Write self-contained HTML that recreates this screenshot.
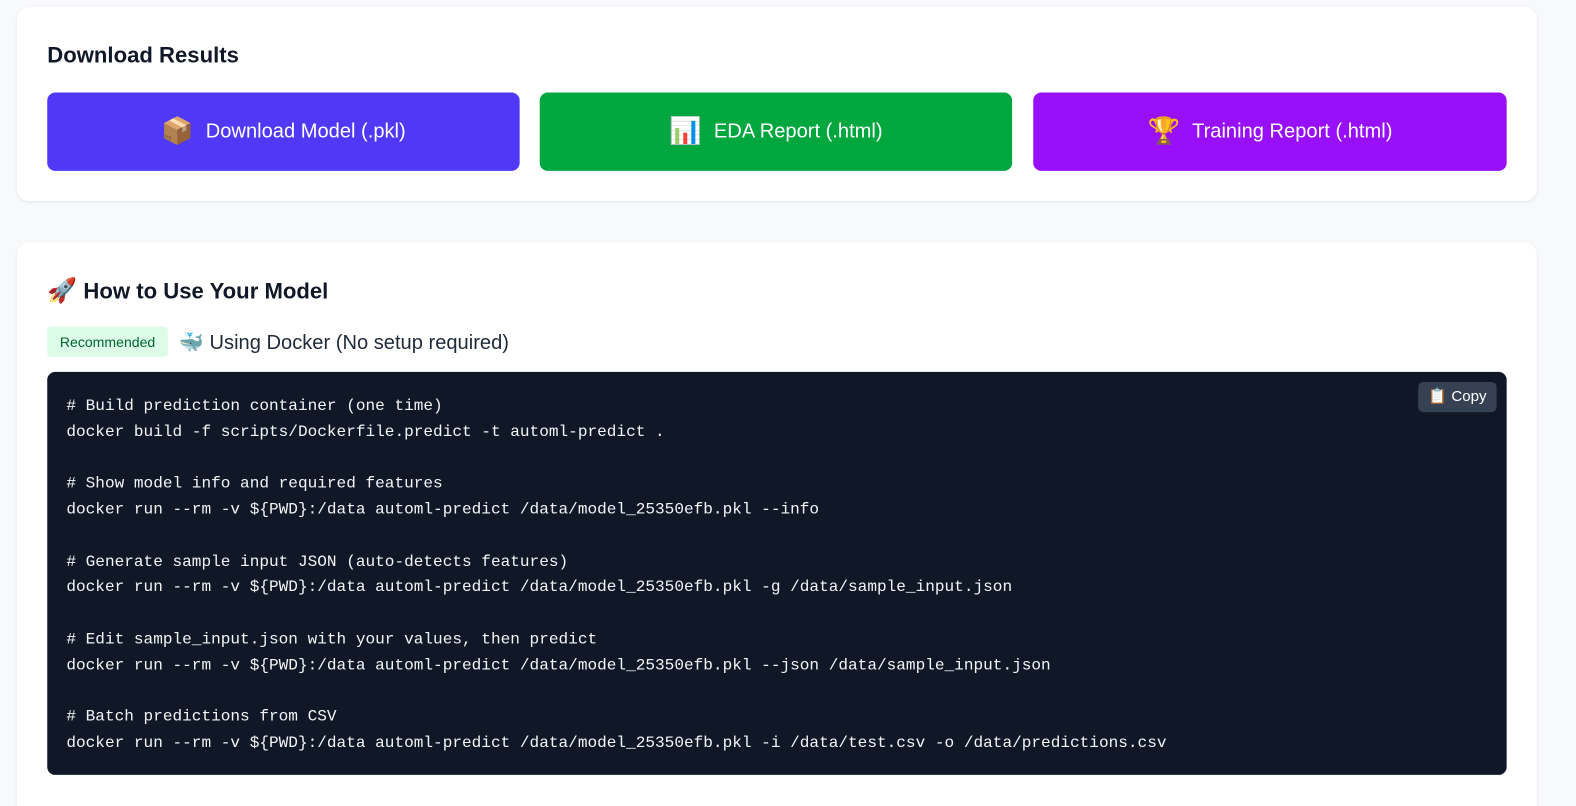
<!DOCTYPE html>
<html style="overflow:hidden;width:1576px"><head><meta charset="utf-8"><style>
html,body{overflow:hidden;margin:0;padding:0}
body{background:#f8f9fb;font-family:"Liberation Sans",sans-serif;width:100%;height:806px;position:relative}
#w{position:absolute;left:0;top:0;width:1568px;height:802px;transform:scale(1.0051);transform-origin:0 0}
.card{position:absolute;left:17px;width:1512px;background:#fff;border-radius:12px;box-shadow:0 1px 3px rgba(0,0,0,.08)}
h2{position:absolute;margin:0;font-size:22px;font-weight:bold;color:#101828}
.btn{position:absolute;top:85px;height:78px;width:470px;border-radius:8px;color:#fff;font-size:20px;display:flex;align-items:center;justify-content:center;gap:12px}
.ico{font-size:26px;font-family:"Noto Color Emoji","DejaVu Sans",sans-serif}
pre{position:absolute;left:30px;top:129px;width:1452px;height:401px;margin:0;background:#101828;border-radius:8px;color:#f3f4f6;font-family:"Liberation Mono",monospace;font-size:16px;line-height:25.75px;padding:22px 0 0 19px;box-sizing:border-box;overflow:hidden}
.copy{position:absolute;right:10px;top:10px;background:#364153;color:#fff;font-family:"Liberation Sans",sans-serif;font-size:15px;padding:0 10px;height:30px;line-height:30px;border-radius:5px}
</style></head><body><div id="w">
<div class="card" style="top:7px;height:193px">
<h2 style="left:30px;top:35px">Download Results</h2>
<div class="btn" style="left:30px;background:#4f39f6"><span class="ico">📦</span>Download Model (.pkl)</div>
<div class="btn" style="left:520px;background:#00a63e"><span class="ico">📊</span>EDA Report (.html)</div>
<div class="btn" style="left:1011px;background:#9810fa;width:471px"><span class="ico">🏆</span>Training Report (.html)</div>
</div>
<div class="card" style="top:241px;height:580px">
<h2 style="left:30px;top:34px"><span class="ico" style="font-size:24px">🚀</span> How to Use Your Model</h2>
<div style="position:absolute;left:30px;top:84px;height:30px;width:120px;background:#dcfce7;color:#016630;font-size:14px;line-height:30px;text-align:center;border-radius:4px">Recommended</div>
<div style="position:absolute;left:161px;top:87px;font-size:20px;color:#1e2939"><span class="ico" style="font-size:20px">🐳</span> Using Docker (No setup required)</div>
<pre><div class="copy">📋 Copy</div># Build prediction container (one time)
docker build -f scripts/Dockerfile.predict -t automl-predict .

# Show model info and required features
docker run --rm -v ${PWD}:/data automl-predict /data/model_25350efb.pkl --info

# Generate sample input JSON (auto-detects features)
docker run --rm -v ${PWD}:/data automl-predict /data/model_25350efb.pkl -g /data/sample_input.json

# Edit sample_input.json with your values, then predict
docker run --rm -v ${PWD}:/data automl-predict /data/model_25350efb.pkl --json /data/sample_input.json

# Batch predictions from CSV
docker run --rm -v ${PWD}:/data automl-predict /data/model_25350efb.pkl -i /data/test.csv -o /data/predictions.csv</pre>
</div>
</div></body></html>
